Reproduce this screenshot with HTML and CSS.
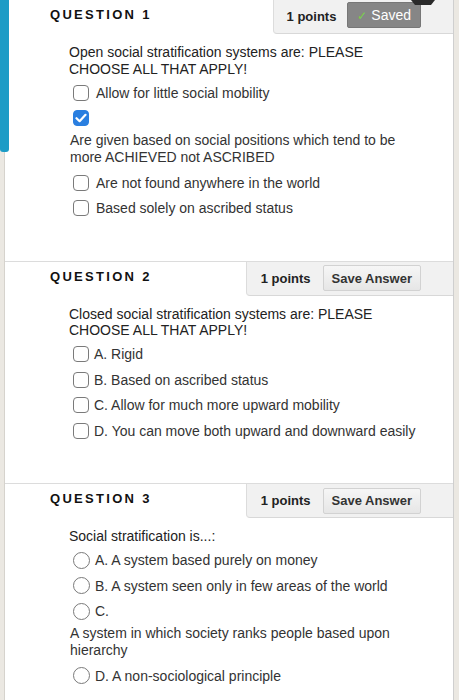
FILE: index.html
```html
<!DOCTYPE html>
<html>
<head>
    <title>Test</title>
    <link rel="stylesheet" href="styles.css">
</head>
<body>
    <div class="page">
        <div class="question current">
            <div class="focus-bar"></div>
            <svg class="pin" width="24" height="6" viewBox="0 0 24 6"><polygon points="0,0 24,0 20,5 4,5" fill="#2a2a2a"/></svg>
            <div class="question-head">
                <h3>QUESTION 1</h3>
                <div class="points-box">
                    <span class="points">1 points</span>
                    <button class="saved"><span class="tick">&#10003;</span> Saved</button>
                </div>
            </div>
            <div class="question-body">
                <div class="question-text">Open social stratification systems are: PLEASE CHOOSE ALL THAT APPLY!</div>
                <label class="option wide"><span class="box"></span>Allow for little social mobility</label>
                <label class="option wide"><span class="box checked">
                    <svg width="12" height="10" viewBox="0 0 12 10"><path d="M1.5 5.2 L4.6 8.2 L10.5 1.8" fill="none" stroke="#fff" stroke-width="2.2" stroke-linecap="round" stroke-linejoin="round"/></svg>
                </span></label>
                <div class="answer-text">Are given based on social positions which tend to be more ACHIEVED not ASCRIBED</div>
                <label class="option wide"><span class="box"></span>Are not found anywhere in the world</label>
                <label class="option wide"><span class="box"></span>Based solely on ascribed status</label>
            </div>
        </div>

        <div class="question">
            <div class="question-head">
                <h3>QUESTION 2</h3>
                <div class="points-box">
                    <span class="points">1 points</span>
                    <button class="save">Save Answer</button>
                </div>
            </div>
            <div class="question-body">
                <div class="question-text">Closed social stratification systems are: PLEASE CHOOSE ALL THAT APPLY!</div>
                <label class="option"><span class="box"></span>A. Rigid</label>
                <label class="option"><span class="box"></span>B. Based on ascribed status</label>
                <label class="option"><span class="box"></span>C. Allow for much more upward mobility</label>
                <label class="option"><span class="box"></span>D. You can move both upward and downward easily</label>
            </div>
        </div>

        <div class="question">
            <div class="question-head">
                <h3>QUESTION 3</h3>
                <div class="points-box">
                    <span class="points">1 points</span>
                    <button class="save">Save Answer</button>
                </div>
            </div>
            <div class="question-body">
                <div class="question-text">Social stratification is...:</div>
                <label class="option"><span class="radio"></span>A. A system based purely on money</label>
                <label class="option"><span class="radio"></span>B. A system seen only in few areas of the world</label>
                <label class="option"><span class="radio"></span>C.</label>
                <div class="answer-text">A system in which society ranks people based upon hierarchy</div>
                <label class="option"><span class="radio"></span>D. A non-sociological principle</label>
            </div>
        </div>
    </div>
</body>
</html>
```

FILE: styles.css
```css
body {
    margin: 0;
    background: #ebe8e2;
    font-family: "Liberation Sans", Arial, sans-serif;
    color: #222;
}

.page {
    margin: 0 5px 0 4px;
    background: #fff;
    border-left: 1px solid #d6d3cd;
    border-right: 1px solid #cfcfcf;
    min-height: 700px;
}

.question {
    position: relative;
    border-top: 1px solid #dcdcdc;
}

.question.current {
    border-top: none;
}

.focus-bar {
    position: absolute;
    left: -5px;
    top: 0;
    width: 9px;
    height: 152px;
    background: #1c9cc6;
    border-radius: 0 0 3px 3px;
}

.pin {
    position: absolute;
    top: 0;
    left: 406px;
}

.question-head {
    display: flex;
    justify-content: space-between;
    align-items: flex-start;
    height: 34px;
}

.question-head h3 {
    margin: 0;
    padding: 7px 0 0 45px;
    font-size: 13px;
    letter-spacing: 2.3px;
    font-weight: bold;
    color: #111;
}

.points-box {
    display: flex;
    align-items: center;
    gap: 12px;
    height: 33px;
    padding: 0 32px 0 14px;
    background: #f1f1f1;
    border-left: 1px solid #dcdcdc;
    border-bottom: 1px solid #d8d8d8;
    border-bottom-left-radius: 4px;
}

.current .points-box {
    padding-left: 13px;
    gap: 11px;
}

.points {
    font-size: 13px;
    font-weight: bold;
    color: #222;
}

.save {
    height: 26px;
    padding: 0 8px;
    font-family: inherit;
    font-size: 13px;
    font-weight: bold;
    color: #333;
    background: linear-gradient(#f6f6f6, #e6e6e6);
    border: 1px solid #d2d2d2;
    border-radius: 2px;
}

.saved {
    height: 26px;
    margin-top: -4px;
    padding: 0 9px;
    font-family: inherit;
    font-size: 14px;
    color: #fff;
    background: #868686;
    border: 1px solid #777;
    border-radius: 2px;
}

.tick {
    color: #7ad04a;
    font-size: 12px;
}

.question-body {
    padding: 10px 48px 39.5px 64px;
    font-size: 14px;
    line-height: 16.5px;
}

.question-text {
    margin-bottom: 3px;
}

.option {
    display: flex;
    align-items: center;
    gap: 5px;
    height: 25.5px;
    padding-left: 4px;
    white-space: nowrap;
    color: #333;
}

.option.wide {
    gap: 7px;
}

.answer-text {
    margin: 1px 0 4px 1px;
    line-height: 17px;
    color: #333;
}

.box {
    flex: none;
    display: flex;
    align-items: center;
    justify-content: center;
    width: 14px;
    height: 14px;
    border: 1.5px solid #7a7a7a;
    border-radius: 4px;
    background: #fff;
}

.box.checked {
    background: #2a7fe0;
    border-color: #2a7fe0;
}

.radio {
    flex: none;
    width: 15px;
    height: 15px;
    border: 1.5px solid #7a7a7a;
    border-radius: 50%;
    background: #fff;
}
```
